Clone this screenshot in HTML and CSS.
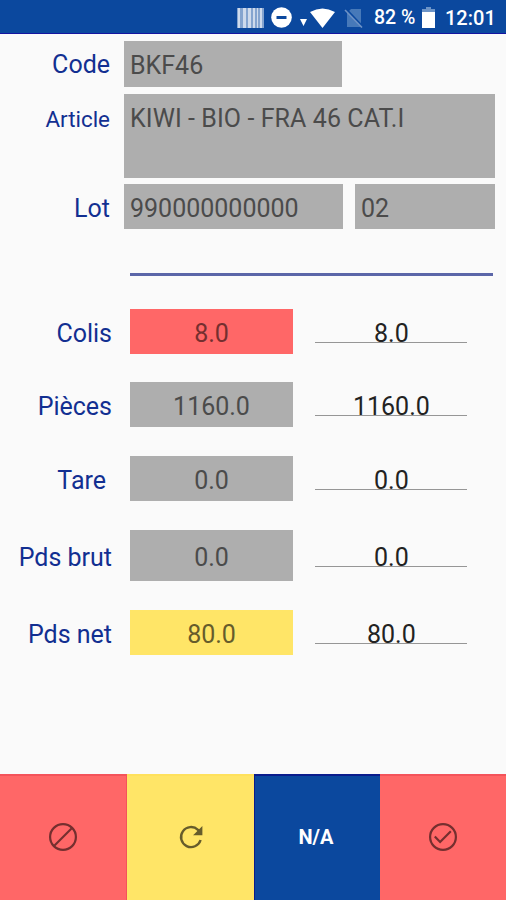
FILE: index.html
```
<!DOCTYPE html>
<html lang="fr">
    <head>
        <meta charset="utf-8">
        <title>Lot</title>
        <link rel="stylesheet" href="styles.css">
    </head>
    <body>
        <div class="status">
            <svg class="barcode" width="28" height="20" viewBox="0 0 28 20">
                <path fill="#fff" opacity=".5" d="M0 0h27v20H0z"/>
                <path fill="#fff" opacity=".6" d="M1 0h2v20H1zM6 0h3v20H6zM11 0h3v20h-3zM16 0h2v20h-2zM20 0h1v20h-1zM23 0h2v20h-2z"/>
            </svg>
            <svg class="dnd" width="21" height="21" viewBox="0 0 21 21">
                <circle cx="10.5" cy="10.5" r="10.3" fill="#fff"/>
                <path fill="#0b489e" d="M5.5 9h10v3h-10z"/>
            </svg>
            <svg class="wifi" width="36" height="20" viewBox="0 0 36 20">
                <path fill="#fff" d="M0 11h7l-3.5 7zM10 4Q22.5-3 35 4L22.5 20z"/>
            </svg>
            <svg class="sim" width="20" height="20" viewBox="0 0 20 20">
                <path fill="#4779b9" d="M7 1h10v18H3V5z"/>
                <path stroke="#0b489e" stroke-width="2" d="M2 1l17 18"/>
                <path stroke="#6e92c5" stroke-width="1.6" d="M1 2l17 17.5"/>
            </svg>
            <span class="percent">82 %</span>
            <svg class="battery" width="13" height="21" viewBox="0 0 13 21">
                <path fill="#6d94c7" d="M4 0h5v2h4v4H0V2h4z"/>
                <path fill="#fff" d="M0 5h13v16H0z"/>
            </svg>
            <span class="clock">12:01</span>
        </div>

        <div class="product">
            <label>Code</label>
            <div class="field code">BKF46</div>
            <label class="small">Article</label>
            <div class="field article">KIWI - BIO - FRA 46 CAT.I</div>
            <label>Lot</label>
            <div class="lot">
                <div class="field">990000000000</div>
                <div class="field">02</div>
            </div>
        </div>

        <div class="line"></div>

        <div class="counts">
            <div class="row">
                <label>Colis</label>
                <div class="value red">8.0</div>
                <div class="entry">8.0</div>
            </div>
            <div class="row">
                <label>Pièces</label>
                <div class="value">1160.0</div>
                <div class="entry">1160.0</div>
            </div>
            <div class="row tare">
                <label>Tare</label>
                <div class="value">0.0</div>
                <div class="entry">0.0</div>
            </div>
            <div class="row tall">
                <label>Pds brut</label>
                <div class="value">0.0</div>
                <div class="entry">0.0</div>
            </div>
            <div class="row">
                <label>Pds net</label>
                <div class="value yellow">80.0</div>
                <div class="entry">80.0</div>
            </div>
        </div>

        <div class="actions">
            <div class="btn red">
                <svg width="30" height="30" viewBox="0 0 30 30" fill="none" stroke="#752f2f" stroke-width="2.2">
                    <circle cx="15" cy="15" r="12.9"/>
                    <path d="M6 24L24 6"/>
                </svg>
            </div>
            <div class="btn yellow">
                <svg width="30" height="30" viewBox="0 0 30 30" fill="none" stroke="#665c2b" stroke-width="2.4">
                    <path d="M24.6 18A10 10 0 1 1 22 7.9L24 10"/>
                    <path fill="#665c2b" stroke="none" d="M26.4 4v9.3h-9.3z"/>
                </svg>
            </div>
            <div class="btn blue">N/A</div>
            <div class="btn red">
                <svg width="30" height="30" viewBox="0 0 30 30" fill="none" stroke="#752f2f" stroke-width="2.2">
                    <circle cx="15" cy="15" r="12.9"/>
                    <path d="M6.8 14.6l5.3 5.4L22.8 9.3"/>
                </svg>
            </div>
        </div>
    </body>
</html>
```

FILE: styles.css
```
*{margin:0;padding:0;box-sizing:border-box;}
body{
    display:flex;
    flex-direction:column;
    width:506px;
    height:900px;
    overflow:hidden;
    background:#fafafa;
    font-family:Roboto, sans-serif;
    font-size:25px;
    line-height:30px;
    color:#4b4b4b;
}
svg{display:block;flex:none;}
label{color:#122f91;text-align:right;white-space:nowrap;}

.status{
    display:flex;
    align-items:center;
    height:34px;
    padding:2px 0 0 237px;
    background:#0b489e;
    border-bottom:1px solid #1414a0;
    color:#fff;
    font-size:20px;
    font-weight:500;
    white-space:nowrap;
}
.dnd{margin-left:6px;}
.wifi{margin-left:8px;}
.sim{margin-left:8px;}
.percent{width:42px;margin-left:10px;padding-top:1px;font-size:19.5px;}
.battery{margin-left:6px;}
.clock{margin-left:10px;}

.product{
    display:grid;
    grid-template-columns:110px 371px;
    grid-template-rows:45.5px 84px 45px;
    column-gap:14px;
    row-gap:7px;
    padding-top:7px;
}
.product label{padding-top:9px;}
.product .small{font-size:22.4px;padding-top:10px;}
.field{padding:9px 6px 0;background:#aeaeae;white-space:nowrap;}
.code{width:218px;padding-top:10px;}
.product .article{height:84px;padding-top:10px;letter-spacing:.08px;}
.lot{display:grid;grid-template-columns:219px 140px;gap:12px;margin:-.5px 0 .5px;}
.lot .field{padding-top:10px;}

.line{height:3px;margin:43.5px 13px 0 130px;background:#5b66a8;}

.counts{display:flex;flex-direction:column;gap:28.8px;margin-top:32.6px;}
.row{
    display:grid;
    grid-template-columns:112px 163px 152px;
    height:45px;
}
.row label,.value,.entry{padding-top:10px;}
.row .value{margin:0 -18px 0 18px;background-color:#aeaeae;text-align:center;}
.row .entry{
    height:34px;
    margin:0 -40.4px 0 40.4px;
    border-bottom:1px solid #969696;
    color:#222;
    text-align:center;
}
.tare label{padding-right:6px;}
.row.tall{height:51px;}
.tall label,.tall .value,.tall .entry{padding-top:12.6px;}
.tall .entry{height:37px;}
.row .value.red{background-color:#ff6767;color:#752f2f;}
.row .value.yellow{background-color:#ffe567;color:#665c2b;}

.actions{
    display:grid;
    grid-template-columns:127px 127px 126px 126px;
    height:126px;
    margin-top:auto;
}
.btn{
    display:flex;
    align-items:center;
    justify-content:center;
    border-top:2px solid #f4535a;
}
.btn svg{margin-bottom:2px;}
.red{background:#ff6767;}
.yellow{background:#ffe567;}
.blue{background:#0b489e;}
.btn.red:first-child{border-right:1px solid #f4535a;}
.btn.yellow{border-top-color:#ffe15c;}
.btn.blue{
    padding:0 3px 2px 0;
    border-top-color:#0a1c8c;
    border-left:1px solid #0a1c8c;
    color:#fff;
    font-size:20px;
    font-weight:700;
}
```
